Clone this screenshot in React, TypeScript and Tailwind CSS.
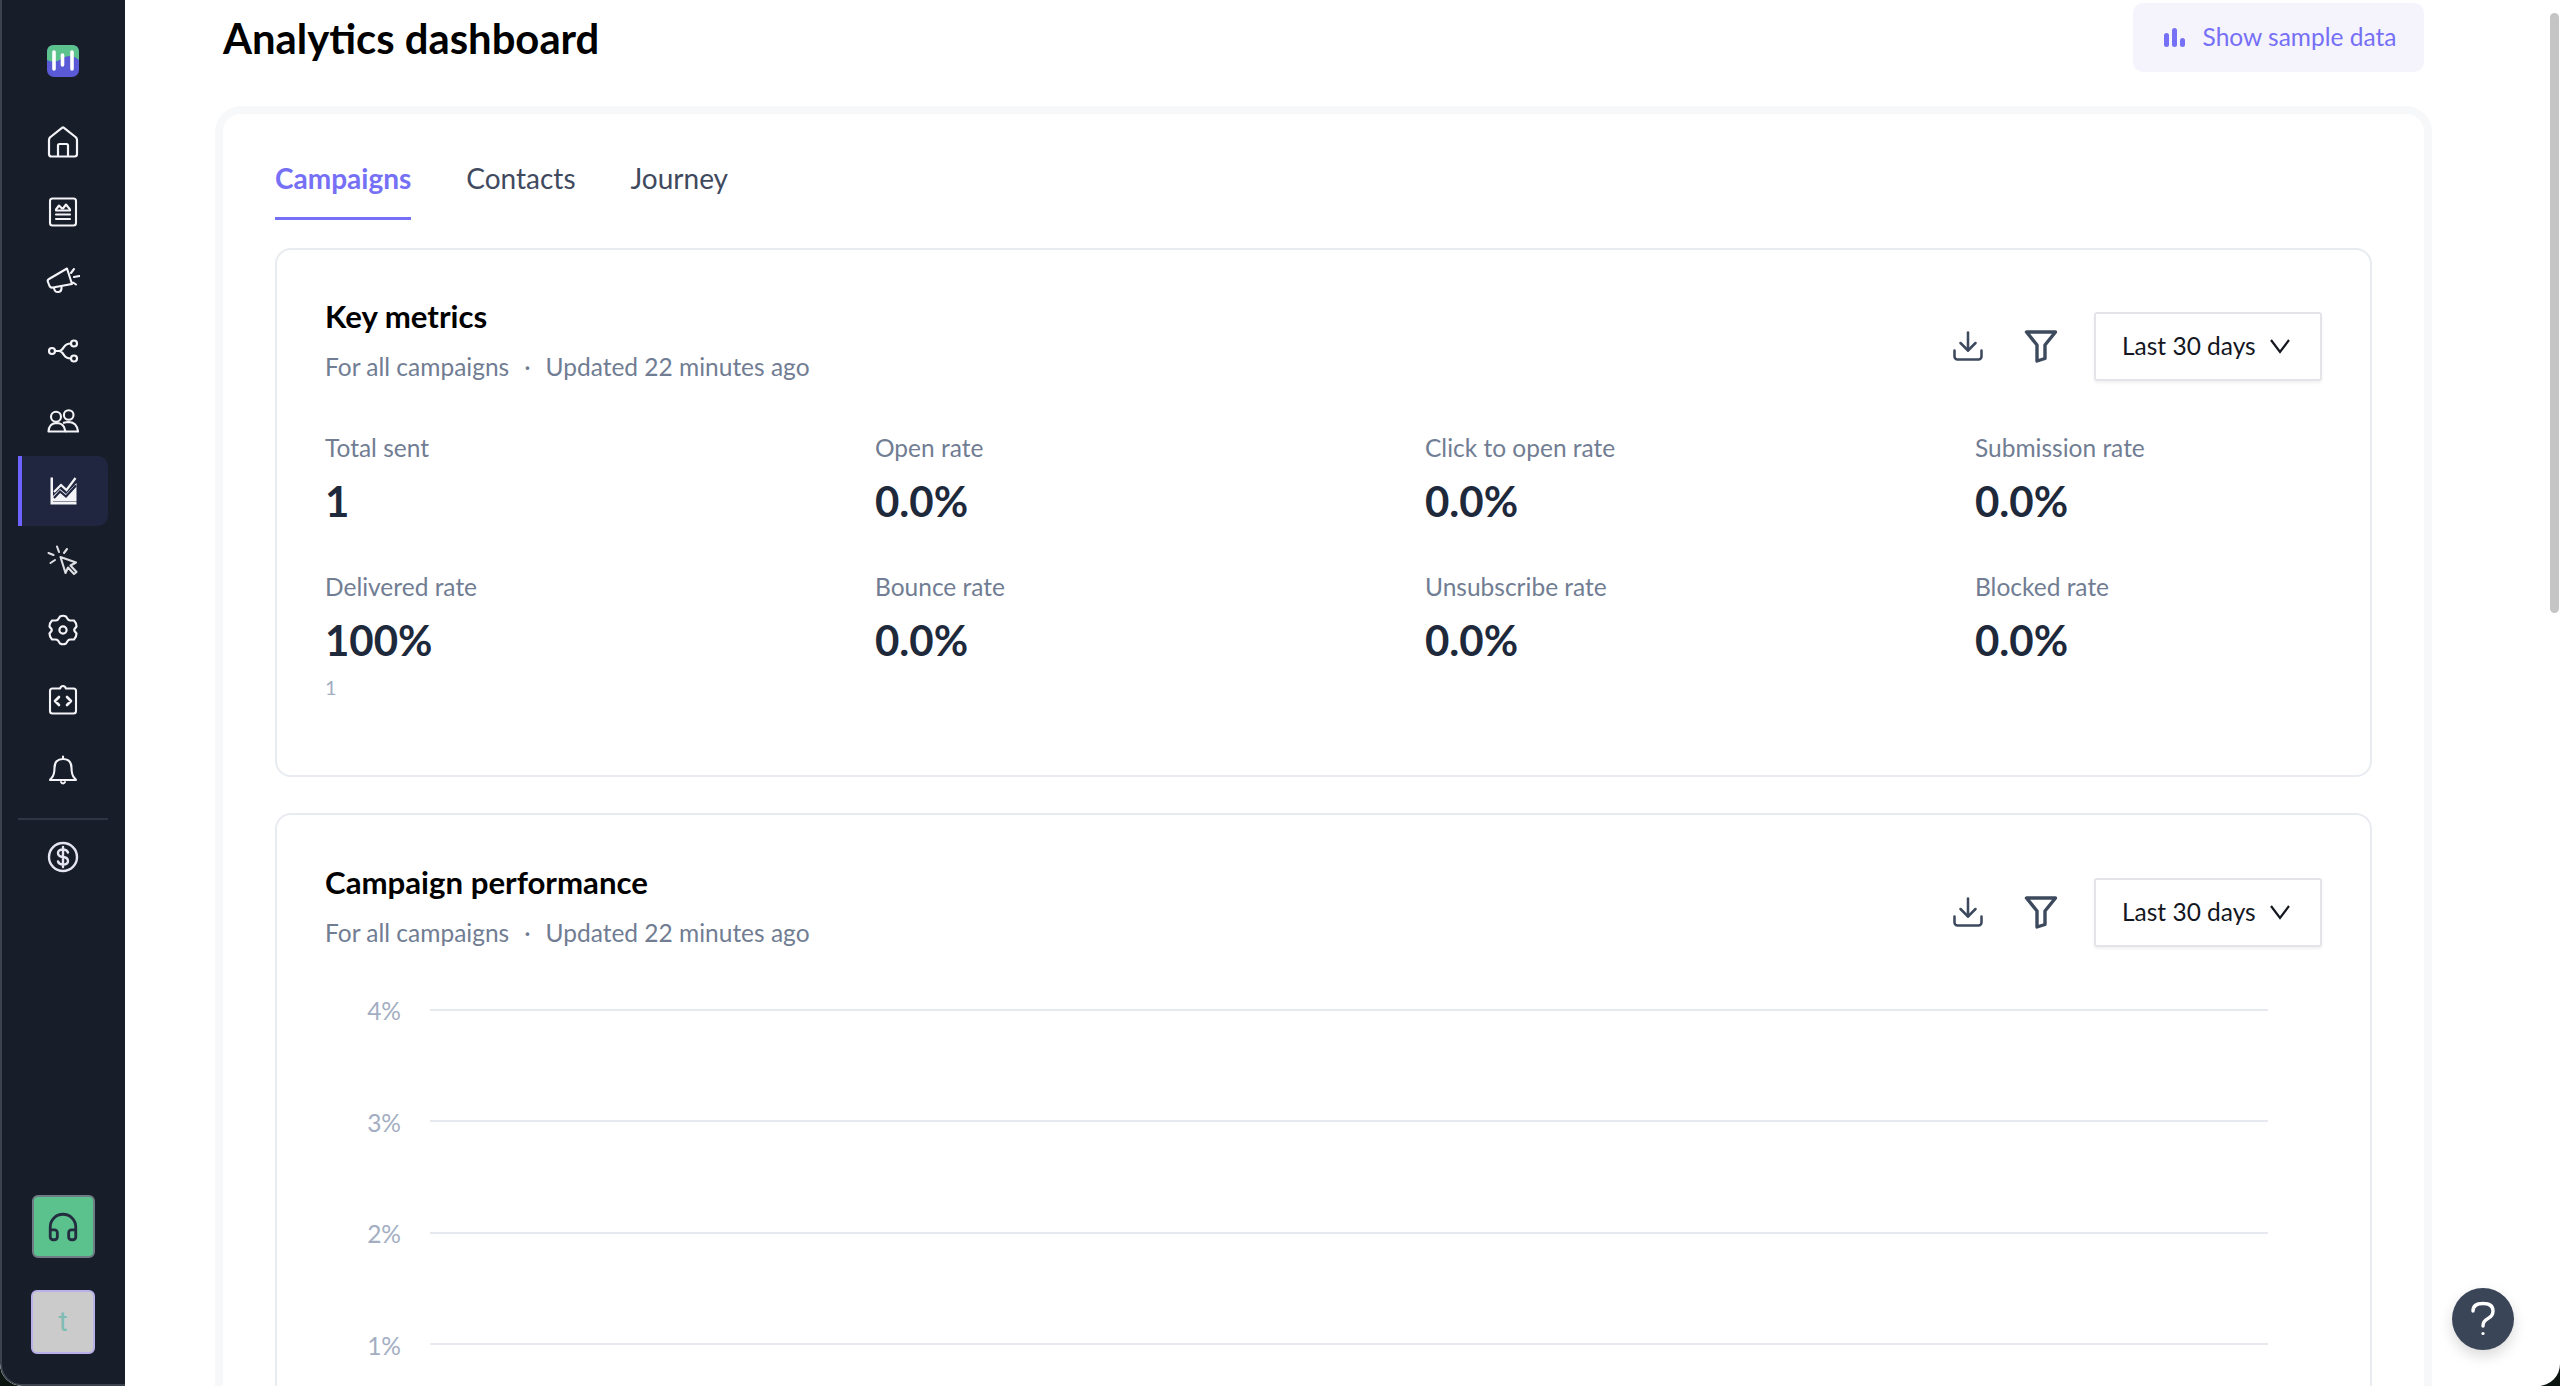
import { Download, Headphones } from 'lucide-react';

const ic = 'fill-none stroke-current';

function Logo() {
  return (
    <svg width="32" height="32" viewBox="0 0 32 32">
      <rect width="32" height="32" rx="7" fill="#5a59d6" />
      <path d="M0 15 Q8 19 16 13 Q24 8 32 15 V7 Q32 0 25 0 H7 Q0 0 0 7 Z" fill="#5cc28e" />
      <path d="M7 7 V24 M15.5 10 V20 M25 7 V24" stroke="#fff" strokeWidth="3.6" strokeLinecap="round" />
    </svg>
  );
}

const navIcons = [
  <svg key="home" width="32" height="32" viewBox="0 0 32 32" className={ic} strokeWidth="2.2" strokeLinejoin="round">
    <path d="M2 14 Q2 12 3.5 11 L15 1.8 Q16 1 17 1.8 L28.5 11 Q30 12 30 14 V28 Q30 30.5 27.5 30.5 H4.5 Q2 30.5 2 28 Z" />
    <path d="M11 30 V19.5 Q11 18 12.5 18 H19.5 Q21 18 21 19.5 V30" />
  </svg>,
  <svg key="list" width="32" height="32" viewBox="0 0 32 32" className={ic} strokeWidth="2.1" strokeLinecap="round">
    <rect x="3" y="2.5" width="26" height="27" rx="2.5" />
    <path d="M9 13.5 L12 9.5 L15 12.5 M16 12.5 L19 8.5 L23 13.5" strokeLinejoin="round" />
    <path d="M9 14.5 H23 M9 18.5 H23 M9 23 H23" />
  </svg>,
  <svg key="mega" width="34" height="32" viewBox="0 0 34 32" className={ic} strokeWidth="2.1" strokeLinejoin="round" strokeLinecap="round">
    <path d="M2 17 Q1 15 3 14 L21 3.5 L26 19 L7 22.5 Q4.5 23 3.5 21 Z" />
    <path d="M8 23 Q8.5 27.5 12.5 27 Q16 26.5 15.5 21.5" />
    <path d="M25 8 L28 4 M28 12 L33.5 11 M27 17.5 L30 19.5" />
  </svg>,
  <svg key="share" width="32" height="32" viewBox="0 0 32 32" className={ic} strokeWidth="2.2" strokeLinecap="round">
    <circle cx="5" cy="16" r="3" />
    <circle cx="27" cy="8.5" r="3" />
    <circle cx="27" cy="23.5" r="3" />
    <path d="M8 16 H12 Q14 16 15.5 14 L17 12 Q19 8.5 24 8.5 M12 16 Q14 16 15.5 18 L17 20 Q19 23.5 24 23.5" />
  </svg>,
  <svg key="people" width="32" height="32" viewBox="0 0 32 32" className={ic} strokeWidth="2.1" strokeLinejoin="round">
    <circle cx="9" cy="11.7" r="5" />
    <circle cx="21.7" cy="10" r="4.8" />
    <path d="M1.5 26.5 Q2 18.5 9 18 Q15 18 17 22 L18.5 26.5 Z" />
    <path d="M16 18 Q19 17 22 17 Q30 17.5 31 26.5 H18.5" />
  </svg>,
  <svg key="chart" width="32" height="32" viewBox="0 0 32 32">
    <path d="M3.5 2.5 H6 V26.5 H29.5 V29.5 H3.5 Z" fill="currentColor" />
    <path d="M6 26 V21 L13 14 L19 19 L29.5 8 V26 Z" fill="currentColor" />
    <path d="M7 17 L14 10 L19.5 15 L28.5 3" className={ic} strokeWidth="2.2" />
    <path d="M7 23 L13 16.5 L19 21.5 L29 10.5" stroke="#212640" strokeWidth="2.2" fill="none" />
  </svg>,
  <svg key="click" width="32" height="32" viewBox="0 0 32 32" className={`${ic} opacity-90`} strokeWidth="2.1" strokeLinejoin="round" strokeLinecap="round">
    <path d="M13.5 12 L29 17.5 L23.5 20.5 L29.5 27 L27 29 L21 22.5 L18.5 28 Z" />
    <path d="M10 1.5 L12 7 M20 4 L17 8 M1.5 8 L6.5 10 M3.5 18 L8 15" />
  </svg>,
  <svg key="gear" width="32" height="32" viewBox="0 0 32 32" className={ic} strokeWidth="2.2" strokeLinejoin="round">
    <path d="M13 2.5 Q16 1 19 2.5 L21 5.5 Q22 6.5 23.5 6.5 L27 6.5 Q29.5 9 29.5 12.5 L27.5 15 Q27 16 27.5 17 L29.5 19.5 Q29.5 23 27 25.5 L23.5 25.5 Q22 25.5 21 26.5 L19 29.5 Q16 31 13 29.5 L11 26.5 Q10 25.5 8.5 25.5 L5 25.5 Q2.5 23 2.5 19.5 L4.5 17 Q5 16 4.5 15 L2.5 12.5 Q2.5 9 5 6.5 L8.5 6.5 Q10 6.5 11 5.5 Z" />
    <circle cx="16" cy="16" r="3.6" />
  </svg>,
  <svg key="code" width="32" height="32" viewBox="0 0 32 32" className={ic} strokeWidth="2.1" strokeLinejoin="round" strokeLinecap="round">
    <path d="M5.5 4.5 H13 Q14 2 16 2 Q18 2 19 4.5 H26.5 Q29 4.5 29 7 V27 Q29 29.5 26.5 29.5 H5.5 Q3 29.5 3 27 V7 Q3 4.5 5.5 4.5 Z" />
    <path d="M12 13 L8 17 L12 21 M20 13 L24 17 L20 21" strokeWidth="2.6" />
  </svg>,
  <svg key="bell" width="32" height="32" viewBox="0 0 32 32" className={ic} strokeWidth="2.1" strokeLinejoin="round" strokeLinecap="round">
    <path d="M3 26 Q3 25 4.5 24 Q7.5 21 7.5 14 Q7.5 5 16 5 Q24.5 5 24.5 14 Q24.5 21 27.5 24 Q29 25 29 26 Z" />
    <path d="M16 2.5 V5 M14 28 Q16 31 18 28" />
  </svg>,
];

function Sidebar() {
  return (
    <div className="w-[125px] shrink-0 h-full bg-[#171d29] border-l-2 border-b-2 border-[#3c424e] rounded-bl-[22px] flex flex-col pt-[45px] pb-[30px] text-[#f4f4f8]">
      <div className="h-[32px] flex justify-center pr-[1px]"><Logo /></div>
      <div className="mt-[30px] flex flex-col pl-[16px] w-[106px]">
        {navIcons.map((icon, i) => (
          <div
            key={i}
            className={`h-[69.8px] flex items-center justify-center rounded-r-[10px] border-l-4 pr-[5px] ${i === 5 ? 'bg-[#212640] border-[#6f63ff]' : 'border-transparent'}`}
          >
            {icon}
          </div>
        ))}
      </div>
      <div className="mt-[13px] ml-[16px] w-[90px] h-[2px] bg-[#2e3646]" />
      <div className="mt-[21px] flex justify-center pr-[1px] text-[#e4e4f2]">
        <svg width="32" height="32" viewBox="0 0 32 32" className={ic} strokeWidth="2.4" strokeLinecap="round">
          <circle cx="16" cy="16" r="14" />
          <path d="M21 11.5 Q20 8.5 16 8.5 Q11 8.5 11 12 Q11 15.5 16 16 Q21 16.5 21 20 Q21 23.5 16 23.5 Q12 23.5 11 20.5 M16 6 V26" />
        </svg>
      </div>
      <div className="mt-auto flex flex-col items-center gap-[32px] pr-[1px]">
        <div className="w-[63px] h-[63px] rounded-[6px] bg-[#5bc28d] border-2 border-[#6f7b85] flex items-center justify-center text-[#232d3f]">
          <Headphones size={34} strokeWidth={2} />
        </div>
        <div className="w-[64px] h-[64px] rounded-[6px] bg-[#cbcbcb] border-2 border-[#b9b0ea] flex items-center justify-center text-[28px] text-[#7fbdb4] font-['Roboto',sans-serif]">
          t
        </div>
      </div>
    </div>
  );
}

function Controls() {
  return (
    <div className="flex items-center mt-[16px] h-[68px]">
      <Download size={36} strokeWidth={1.7} className="text-[#3d4a5e]" />
      <svg width="34" height="34" viewBox="0 0 34 34" className="ml-[38px] text-[#3d4a5e] fill-none stroke-current" strokeWidth="3.4" strokeLinejoin="round">
        <path d="M2.5 3 H31.5 L21 16 V29.5 L13 32 V16 Z" />
      </svg>
      <div className="ml-[36px] w-[228px] h-[69px] border-2 border-[#e2e4e8] rounded-[3px] shadow-[0_2px_3px_rgba(0,0,0,0.06)] flex items-center pl-[26px] gap-[14px] text-[24.5px] text-[#14171f]">
        Last 30 days
        <svg width="20" height="16" viewBox="0 0 20 16" className="fill-none stroke-current" strokeWidth="2.2">
          <path d="M1 2 L10 14 L19 2" />
        </svg>
      </div>
    </div>
  );
}

const metrics = [
  { label: 'Total sent', value: '1' },
  { label: 'Open rate', value: '0.0%' },
  { label: 'Click to open rate', value: '0.0%' },
  { label: 'Submission rate', value: '0.0%' },
  { label: 'Delivered rate', value: '100%', sub: '1' },
  { label: 'Bounce rate', value: '0.0%' },
  { label: 'Unsubscribe rate', value: '0.0%' },
  { label: 'Blocked rate', value: '0.0%' },
];

function Heading({ title }: { title: string }) {
  return (
    <div>
      <h2 className="h-[40px] leading-[40px] text-[31.2px] font-bold text-black">{title}</h2>
      <p className="mt-[14px] h-[34px] leading-[34px] text-[24.5px] text-[#717d93]">
        For all campaigns<span className="mx-[15px]">·</span>Updated 22 minutes ago
      </p>
    </div>
  );
}

function KeyMetrics() {
  return (
    <div className="h-[529px] border-2 border-[#e8ebf0] rounded-[16px] pt-[46px] pl-[48px] pr-[48px]">
      <div className="flex justify-between">
        <Heading title="Key metrics" />
        <Controls />
      </div>
      <div className="mt-[47px] grid grid-cols-[550px_550px_550px_1fr] gap-y-[44px]">
        {metrics.map((m) => (
          <div key={m.label}>
            <div className="h-[34px] leading-[34px] text-[24.5px] text-[#717d93]">{m.label}</div>
            <div className="mt-[11px] h-[50px] leading-[50px] text-[42px] font-bold text-[#1e293b]">{m.value}</div>
            {m.sub && <div className="mt-[8px] h-[28px] leading-[28px] text-[20px] text-[#a3aec2]">{m.sub}</div>}
          </div>
        ))}
      </div>
    </div>
  );
}

function Performance() {
  return (
    <div className="mt-[36px] border-2 border-[#e8ebf0] rounded-[16px] pt-[47px] px-[48px]">
      <div className="flex justify-between">
        <Heading title="Campaign performance" />
        <Controls />
      </div>
      <div className="mt-[4px]">
        {['4%', '3%', '2%', '1%'].map((tick) => (
          <div key={tick} className="h-[111.5px] flex items-center">
            <div className="w-[76px] text-right text-[24.5px] text-[#a3aec2] translate-y-[2px]">{tick}</div>
            <div className="ml-[29px] w-[1838px] h-[2px] bg-[#e6e9ef]" />
          </div>
        ))}
      </div>
    </div>
  );
}

export default function App() {
  return (
    <div className="h-[1386px] overflow-hidden bg-[#0b140f] font-['Lato',sans-serif]">
      <div className="relative h-full flex overflow-hidden rounded-b-[22px] bg-white">
        <Sidebar />
        <main className="flex-1 min-w-0 pl-[98px] pt-[3px] overflow-hidden">
          <div className="w-[2201px]">
            <div className="h-[69px] flex items-center justify-between">
              <h1 className="text-[41.8px] font-bold text-black pt-[2px]">Analytics dashboard</h1>
              <button className="w-[291px] h-[69px] rounded-[10px] bg-[#f5f4fc] pl-[3px] flex items-center justify-center gap-[18px] text-[24.5px] text-[#7570f5]">
                <svg width="21" height="19" viewBox="0 0 21 19" fill="#7570f5">
                  <rect x="0" y="5" width="5" height="14" rx="2.5" />
                  <rect x="8" y="0" width="5" height="19" rx="2.5" />
                  <rect x="16" y="10" width="5" height="9" rx="2.5" />
                </svg>
                Show sample data
              </button>
            </div>
            <div className="mt-[42px] rounded-[18px] shadow-[0_0_0_8px_#f7f8fa] pl-[52px] pr-[52px] pt-[44px]">
              <div className="flex gap-[55px]">
                {['Campaigns', 'Contacts', 'Journey'].map((t, i) => (
                  <div
                    key={t}
                    className={`h-[62px] leading-[41px] border-b-[3px] text-[28px] ${i === 0 ? 'border-[#7570f5] text-[#7570f5] font-bold' : 'border-transparent text-[#3f4a5e]'}`}
                  >
                    {t}
                  </div>
                ))}
              </div>
              <div className="mt-[28px]">
                <KeyMetrics />
                <Performance />
              </div>
            </div>
          </div>
        </main>
        <div className="absolute right-[1px] top-[13px] w-[9px] h-[600px] rounded-full bg-[#c5c5c5]" />
        <button className="absolute left-[2452px] top-[1288px] w-[62px] h-[62px] rounded-full bg-[#3a4558] shadow-[0_6px_14px_rgba(0,0,0,0.15)] flex items-center justify-center text-white">
          <svg width="26" height="36" viewBox="0 0 26 36" className="fill-none stroke-current" strokeWidth="3.4" strokeLinecap="round">
            <path d="M3 10 Q3 2.5 13 2.5 Q23 2.5 23 10 Q23 15 18 17.5 Q13 20 13 25" />
            <circle cx="13" cy="32.5" r="1.6" fill="currentColor" stroke="none" />
          </svg>
        </button>
      </div>
    </div>
  );
}
